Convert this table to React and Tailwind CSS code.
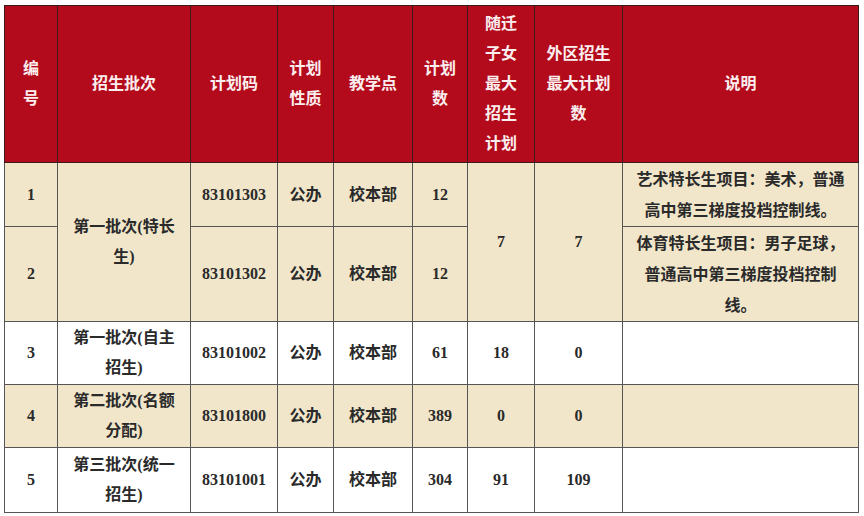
import React from "react";

const F = { fontFamily: '"Liberation Serif", "Noto Sans CJK SC", serif' };

export default function App() {
  const th = "border border-[#3a1a1a] text-[#fbeeee] font-bold text-[16px] leading-[30px] text-center align-middle p-0";
  const td = "border border-[#555] text-[#2a2a2a] font-bold text-[16px] leading-[30px] text-center align-middle p-0";
  const beige = "bg-[#f1e6ca]";
  return (
    <div className="w-[864px] h-[516px] bg-white pt-[5px] pl-[4px]" style={F}>
      <table className="table-fixed border-collapse border border-[#666] w-[854px]">
        <colgroup>
          <col className="w-[53px]" />
          <col className="w-[133px]" />
          <col className="w-[87px]" />
          <col className="w-[56px]" />
          <col className="w-[79px]" />
          <col className="w-[55px]" />
          <col className="w-[67px]" />
          <col className="w-[88px]" />
          <col className="w-[236px]" />
        </colgroup>
        <thead>
          <tr className="h-[157px] bg-[#b30a1c]">
            <th className={th + " leading-[17px]"}>编<br />号</th>
            <th className={th}>招生批次</th>
            <th className={th}>计划码</th>
            <th className={th}>计划<br />性质</th>
            <th className={th}>教学点</th>
            <th className={th}>计划<br />数</th>
            <th className={th}>随迁<br />子女<br />最大<br />招生<br />计划</th>
            <th className={th}>外区招生<br />最大计划<br />数</th>
            <th className={th}>说明</th>
          </tr>
        </thead>
        <tbody>
          <tr className={"h-[64px] " + beige}>
            <td className={td}>1</td>
            <td className={td} rowSpan={2}>第一批次(特长<br />生)</td>
            <td className={td}>83101303</td>
            <td className={td}>公办</td>
            <td className={td}>校本部</td>
            <td className={td}>12</td>
            <td className={td} rowSpan={2}>7</td>
            <td className={td} rowSpan={2}>7</td>
            <td className={td + " leading-[31px]"}>艺术特长生项目：美术，普通<br />高中第三梯度投档控制线。</td>
          </tr>
          <tr className={"h-[95px] " + beige}>
            <td className={td}>2</td>
            <td className={td}>83101302</td>
            <td className={td}>公办</td>
            <td className={td}>校本部</td>
            <td className={td}>12</td>
            <td className={td + " leading-[31px]"}>体育特长生项目：男子足球，<br />普通高中第三梯度投档控制<br />线。</td>
          </tr>
          <tr className="h-[63px] bg-white">
            <td className={td}>3</td>
            <td className={td}>第一批次(自主<br />招生)</td>
            <td className={td}>83101002</td>
            <td className={td}>公办</td>
            <td className={td}>校本部</td>
            <td className={td}>61</td>
            <td className={td}>18</td>
            <td className={td}>0</td>
            <td className={td}></td>
          </tr>
          <tr className={"h-[63px] " + beige}>
            <td className={td}>4</td>
            <td className={td}>第二批次(名额<br />分配)</td>
            <td className={td}>83101800</td>
            <td className={td}>公办</td>
            <td className={td}>校本部</td>
            <td className={td}>389</td>
            <td className={td}>0</td>
            <td className={td}>0</td>
            <td className={td}></td>
          </tr>
          <tr className="h-[65px] bg-white">
            <td className={td}>5</td>
            <td className={td}>第三批次(统一<br />招生)</td>
            <td className={td}>83101001</td>
            <td className={td}>公办</td>
            <td className={td}>校本部</td>
            <td className={td}>304</td>
            <td className={td}>91</td>
            <td className={td}>109</td>
            <td className={td}></td>
          </tr>
        </tbody>
      </table>
    </div>
  );
}
